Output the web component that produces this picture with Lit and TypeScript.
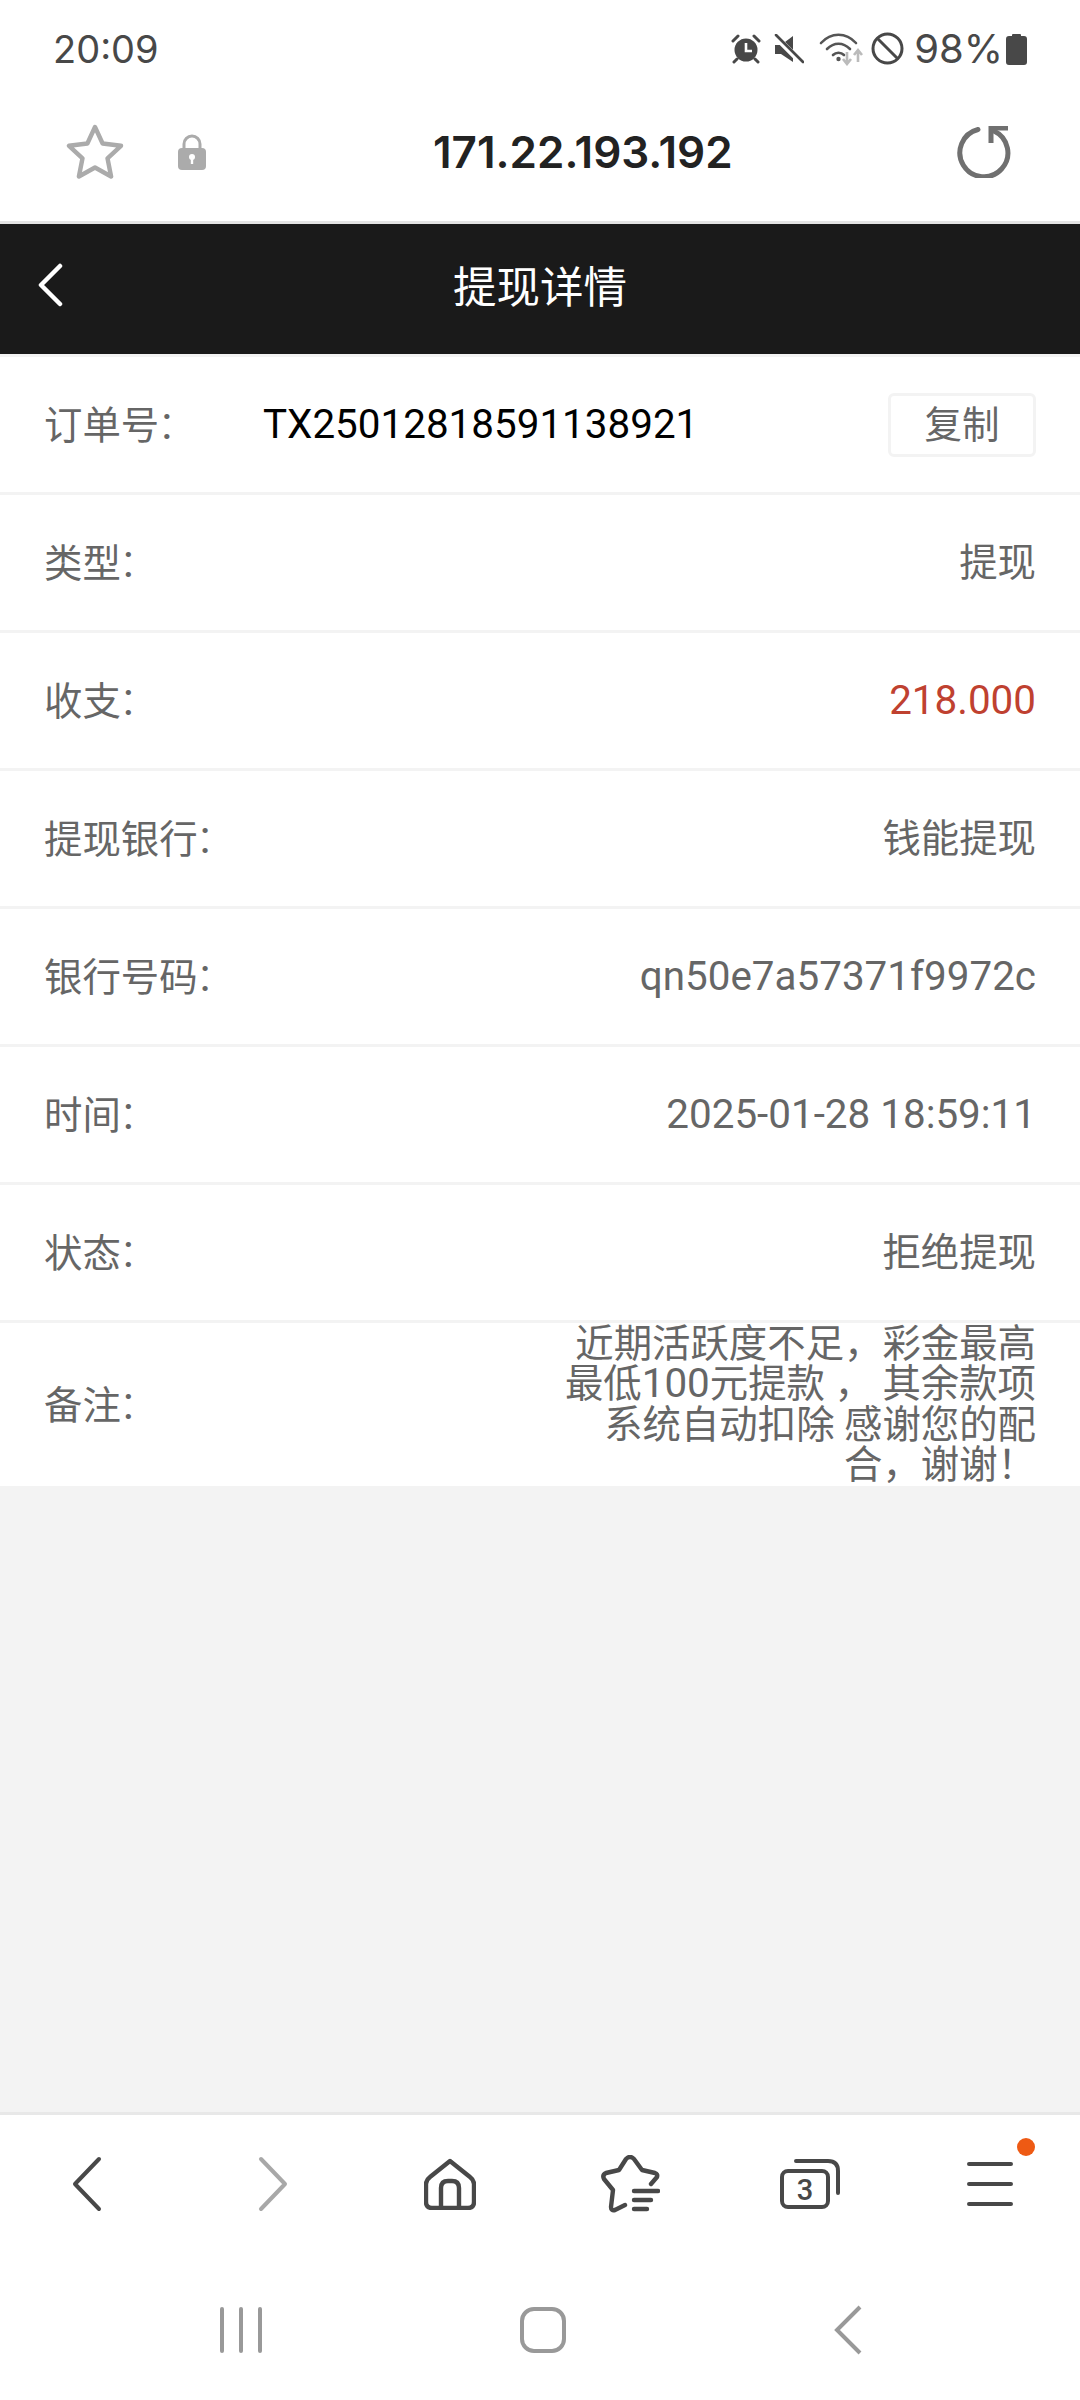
import { LitElement, css, html } from 'lit';
import { customElement } from 'lit/decorators.js';
import { classMap } from 'lit/directives/class-map.js';

const ROWS = [
  { label: '类型', value: '提现' },
  { label: '收支', value: '218.000', num: true, red: true },
  { label: '提现银行', value: '钱能提现' },
  { label: '银行号码', value: 'qn50e7a57371f9972c', num: true },
  { label: '时间', value: '2025-01-28 18:59:11', num: true },
  { label: '状态', value: '拒绝提现' },
];

@customElement('app-root')
export class AppRoot extends LitElement {
  private _label(text: string) {
    return html`${text}<span class="colon">:</span>`;
  }

  render() {
    return html`
      <div class="status">
        <span class="clock">20:09</span>
        <div class="status-icons">
          <svg class="alarm" width="30" height="30" viewBox="0 0 30 30">
            <circle cx="15" cy="16" r="11.5" fill="#484848" />
            <path d="M15 9v8h6" fill="none" stroke="#fff" stroke-width="2.6" />
            <path d="M2 7l5-5M28 7l-5-5M6 25l-3 3M24 25l3 3" stroke="#484848" stroke-width="3" stroke-linecap="round" />
          </svg>
          <svg width="30" height="30" viewBox="0 0 30 30">
            <path d="M1 11h6l12-9v26L7 20H1z" fill="#484848" />
            <path d="M1 2l27 27" stroke="#fff" stroke-width="6" />
            <path d="M2 1l27 27" stroke="#484848" stroke-width="2.6" stroke-linecap="round" />
          </svg>
          <svg class="wifi" width="44" height="34" viewBox="0 0 44 34">
            <path d="M2 11C12 0 27 0 37 11M8 17c7-7 16-7 23 0M14 23c3-3 8-3 11 0" fill="none" stroke="#555" stroke-width="2.6" stroke-linecap="round" />
            <circle cx="19.500" cy="27" r="2.200" fill="#555" />
            <path d="M28 20v11M24 27l4 5 4-5" fill="none" stroke="#bbb" stroke-width="2.600" />
            <path d="M39 30V19M35 23l4-5 4 5" fill="none" stroke="#bbb" stroke-width="2.600" />
          </svg>
          <svg class="ban" width="33" height="33" viewBox="0 0 33 33">
            <circle cx="16.500" cy="16.500" r="14.500" fill="none" stroke="#484848" stroke-width="3" />
            <path d="M6.500 6.500l20 20" stroke="#484848" stroke-width="3" />
          </svg>
          <span class="battery-text">98%</span>
          <svg width="21" height="32" viewBox="0 0 21 32">
            <path d="M6 3V2q0-1 1-1h7q1 0 1 1v1h3q3 0 3 3v23q0 3-3 3H3q-3 0-3-3V6q0-3 3-3z" fill="#484848" />
          </svg>
        </div>
      </div>

      <div class="address">
        <svg class="star" width="58" height="56" viewBox="0 0 58 56">
          <path d="M29 3l7.600 16.500 18.400 2.300-13.500 12.500 3.600 18.200L29 43.500 12.900 52.500l3.600-18.200L3 21.800l18.400-2.300z" fill="none" stroke="#ababab" stroke-width="4.400" stroke-linejoin="round" />
        </svg>
        <svg class="lock" width="28" height="36" viewBox="0 0 28 36">
          <path d="M6 16V10a8 8 0 0 1 16 0v6" fill="none" stroke="#ababab" stroke-width="3" />
          <rect y="14" width="28" height="22" rx="4" fill="#ababab" />
          <circle cx="14" cy="23" r="3" fill="#fff" />
          <rect x="12.800" y="24" width="2.400" height="6" fill="#fff" />
        </svg>
        <span class="url">171.22.193.192</span>
        <svg class="reload" width="54" height="52" viewBox="0 0 54 52">
          <path d="M21 3.500A24 24 0 1 0 37 5" fill="none" stroke="#707070" stroke-width="5" stroke-linecap="round" />
          <path d="M34 17V2h17" fill="none" stroke="#707070" stroke-width="5" />
        </svg>
      </div>

      <header class="title-bar">
        <svg class="title-back" width="26" height="44" viewBox="0 0 26 44">
          <path d="M23 3L4 22l19 19" fill="none" stroke="#fff" stroke-width="4.500" stroke-linecap="round" stroke-linejoin="round" />
        </svg>
        提现详情
      </header>

      <main class="content">
        <div class="row">
          <span class="label order-label">${this._label('订单号')}</span>
          <span class="order-no num">TX25012818591138921</span>
          <span class="copy">复制</span>
        </div>
        ${ROWS.map(
          (r) => html`
            <div class="row">
              <span class="label">${this._label(r.label)}</span>
              <span class=${classMap({ value: true, num: !!r.num, red: !!r.red })}>${r.value}</span>
            </div>
          `,
        )}
        <div class="row note-row">
          <span class="label">${this._label('备注')}</span>
          <div class="value note">
            <div>近期活跃度不足，彩金最高</div>
            <div>最低<span class="num">100</span>元提款 ， 其余款项</div>
            <div>系统自动扣除 感谢您的配</div>
            <div>合，谢谢！</div>
          </div>
        </div>
      </main>

      <nav class="browser-nav">
        <svg class="nav-back" width="32" height="58" viewBox="0 0 32 58">
          <path d="M28 4L4 29l24 25" fill="none" stroke="#484848" stroke-width="4" stroke-linecap="round" stroke-linejoin="round" />
        </svg>
        <svg class="nav-forward" width="32" height="58" viewBox="0 0 32 58">
          <path d="M4 4l24 25L4 54" fill="none" stroke="#a8a8a8" stroke-width="4" stroke-linecap="round" stroke-linejoin="round" />
        </svg>
        <svg width="52" height="52" viewBox="0 0 52 52">
          <path d="M26 3L6 19q-4 3-4 7v18q0 6 6 6h36q6 0 6-6V26q0-4-4-7z" fill="none" stroke="#484848" stroke-width="4.400" stroke-linejoin="round" />
          <path d="M17 50V30q0-7 7-7h4q7 0 7 7v20" fill="none" stroke="#484848" stroke-width="4.400" />
        </svg>
        <svg width="60" height="58" viewBox="0 0 60 58">
          <path d="M51 29l6-7q1-3-2-4l-13-3-8-11q-4-4-8 0l-7 11-13 3q-4 2-2 6l9 11-2 17q0 4 4 3l10-5" fill="none" stroke="#484848" stroke-width="4.400" stroke-linecap="round" stroke-linejoin="round" />
          <path d="M34 36h24M34 45h17M34 54h13" stroke="#484848" stroke-width="4.400" stroke-linecap="round" />
        </svg>
        <div class="tabs-icon">
          <svg width="60" height="50" viewBox="0 0 60 50">
            <rect x="2" y="12" width="46" height="36" rx="6" fill="none" stroke="#484848" stroke-width="4" />
            <path d="M16 2h32q10 0 10 10v22" fill="none" stroke="#484848" stroke-width="4" stroke-linecap="round" />
          </svg>
          <span class="tabs-count">3</span>
        </div>
        <div class="menu-icon">
          <svg width="46" height="46" viewBox="0 0 46 46">
            <path d="M2 3h42M2 23h42M2 43h42" stroke="#484848" stroke-width="4" stroke-linecap="round" />
          </svg>
          <span class="dot"></span>
        </div>
      </nav>

      <div class="system-nav">
        <svg width="42" height="46" viewBox="0 0 42 46">
          <path d="M2 2v42M21 2v42M40 2v42" stroke="#999" stroke-width="4" stroke-linecap="round" />
        </svg>
        <svg width="46" height="46" viewBox="0 0 46 46">
          <rect x="2" y="2" width="42" height="42" rx="12" fill="none" stroke="#999" stroke-width="4" />
        </svg>
        <svg class="sys-back" width="28" height="50" viewBox="0 0 28 50">
          <path d="M26 2L3 25l23 23" fill="none" stroke="#999" stroke-width="4" />
        </svg>
      </div>
    `;
  }

  static styles = css`
    :host {
      display: flex;
      flex-direction: column;
      height: 2400px;
      background: #fff;
      font-family: Roboto, 'Noto Sans CJK SC', sans-serif;
      overflow: hidden;
    }

    svg {
      display: block;
      flex: none;
    }

    .status {
      height: 97px;
      flex: none;
      display: flex;
      align-items: center;
      justify-content: space-between;
      padding: 0 53px;
      color: #484848;
      font-family: Inter, Roboto, sans-serif;
      font-size: 38px;
    }

    .status-icons {
      display: flex;
      align-items: center;
      gap: 15px;
      font-size: 40px;
    }

    .alarm {
      margin-right: -2px;
    }

    .wifi {
      margin-right: -7px;
    }

    .battery-text {
      margin-left: -5px;
      margin-right: -12px;
    }

    .address {
      box-sizing: border-box;
      height: 127px;
      flex: none;
      display: flex;
      align-items: center;
      padding: 0 69px 14px 66px;
      border-bottom: 3px solid #e4e4e4;
    }

    .lock {
      margin-left: 54px;
    }

    .url {
      margin-left: 227px;
      font-family: Inter, Roboto, sans-serif;
      font-size: 44px;
      font-weight: 600;
      color: #222;
    }

    .reload {
      margin-left: auto;
    }

    .title-bar {
      position: relative;
      box-sizing: border-box;
      height: 133px;
      flex: none;
      display: flex;
      align-items: center;
      justify-content: center;
      background: #1a1a1a;
      border-bottom: 3px solid #f3f3f3;
      color: #fff;
      font-size: 43.500px;
      line-height: 50px;
    }

    .title-back {
      position: absolute;
      left: 37px;
      top: 39px;
    }

    .content {
      flex: 1;
      background: #f3f3f3;
    }

    .row {
      box-sizing: border-box;
      height: 138px;
      display: flex;
      align-items: center;
      justify-content: space-between;
      padding: 0 44px;
      background: #fff;
      border-bottom: 3px solid #f3f3f3;
      font-size: 38.400px;
      line-height: 44px;
      color: #666;
    }

    .num {
      font-size: 40.400px;
    }

    .colon {
      font-size: 46px;
      margin-left: 2px;
    }

    .order-label {
      width: 219px;
      flex: none;
    }

    .order-no {
      flex: 1;
      color: #000;
    }

    .copy {
      box-sizing: border-box;
      width: 148px;
      height: 64px;
      display: flex;
      align-items: center;
      justify-content: center;
      border: 3px solid #f3f3f3;
      border-radius: 6px;
      font-size: 37.500px;
    }

    .red {
      color: #bf4130;
    }

    .note-row {
      height: 163px;
      border-bottom: 0;
    }

    .note {
      text-align: right;
      line-height: 40.300px;
    }

    .browser-nav {
      flex: none;
      height: 138px;
      display: grid;
      grid-template-columns: repeat(6, 180px);
      justify-items: center;
      align-items: center;
      border-top: 3px solid #e8e8e8;
    }

    .nav-back {
      margin-right: 6px;
    }

    .nav-forward {
      margin-left: 6px;
    }

    .tabs-icon,
    .menu-icon {
      position: relative;
    }

    .tabs-count {
      position: absolute;
      left: 2px;
      top: 12px;
      width: 46px;
      height: 36px;
      line-height: 38px;
      text-align: center;
      font-size: 29px;
      font-weight: 500;
      color: #484848;
    }

    .dot {
      position: absolute;
      right: -22px;
      top: -23px;
      width: 18px;
      height: 18px;
      border-radius: 50%;
      background: #ee5a14;
    }

    .system-nav {
      box-sizing: border-box;
      flex: none;
      height: 147px;
      display: flex;
      align-items: center;
      gap: 258px;
      padding: 7px 0 0 220px;
    }

    .sys-back {
      margin-left: 10px;
    }
  `;
}

declare global {
  interface HTMLElementTagNameMap {
    'app-root': AppRoot;
  }
}
